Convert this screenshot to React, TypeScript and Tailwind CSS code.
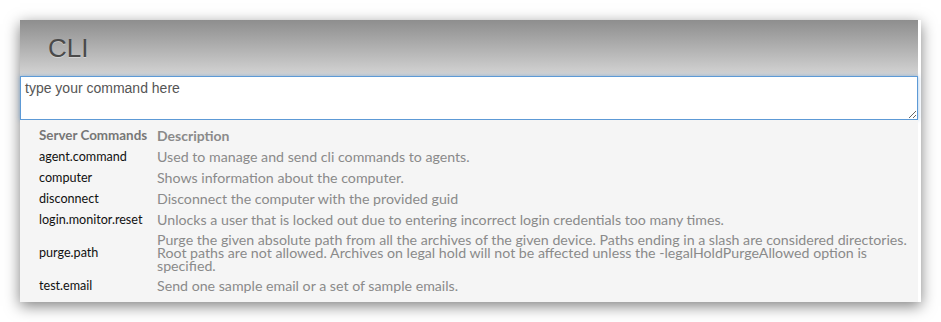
import React from "react";

const rows: { cmd: string; desc: string }[] = [
  { cmd: "agent.command", desc: "Used to manage and send cli commands to agents." },
  { cmd: "computer", desc: "Shows information about the computer." },
  { cmd: "disconnect", desc: "Disconnect the computer with the provided guid" },
  {
    cmd: "login.monitor.reset",
    desc: "Unlocks a user that is locked out due to entering incorrect login credentials too many times.",
  },
  {
    cmd: "purge.path",
    desc: "Purge the given absolute path from all the archives of the given device. Paths ending in a slash are considered directories. Root paths are not allowed. Archives on legal hold will not be affected unless the -legalHoldPurgeAllowed option is specified.",
  },
  { cmd: "test.email", desc: "Send one sample email or a set of sample emails." },
];

export default function App() {
  return (
    <div className="w-[941px] h-[322px] bg-white pt-[20px] pl-[20px] overflow-hidden">
      <div className="w-[901px] bg-white shadow-[0_4px_14px_rgba(0,0,0,0.5)]">
        <div className="w-[898px]">
          <div className="h-[56px] bg-gradient-to-b from-[#8e8e8e] to-[#d5d5d5] flex items-center pl-[28px]">
            <span
              className="text-[26px] text-[#4a4a4a] leading-none [text-shadow:0_1px_0_rgba(255,255,255,0.35)]"
              style={{ fontFamily: '"Liberation Sans", Arial, sans-serif' }}
            >
              CLI
            </span>
          </div>
          <textarea
            autoFocus
            placeholder="type your command here"
            className="block w-full h-[44px] bg-white border border-[#5d9ad6] shadow-[0_0_4px_rgba(93,154,214,0.6)] outline-none px-[4px] py-[2px] text-[14px] leading-[18px] text-[#222] placeholder:text-[#555]"
            style={{ fontFamily: '"Liberation Sans", Arial, sans-serif' }}
          />
          <div
            className="bg-[#f5f5f5] pt-[5px] pb-[6px] pl-[19px] pr-[6px]"
            style={{ fontFamily: 'Lato, "Liberation Sans", sans-serif' }}
          >
            <div className="grid grid-cols-[118px_1fr]">
              <div className="h-[21px] flex items-center text-[13.4px] font-bold text-[#777] whitespace-nowrap">
                Server Commands
              </div>
              <div className="h-[21px] flex items-center text-[14px] font-bold text-[#8a8a8a]">
                Description
              </div>
              {rows.map((r) => (
                <React.Fragment key={r.cmd}>
                  <div className="flex items-center text-[12.6px] text-[#111] leading-[13px] whitespace-nowrap">
                    {r.cmd}
                  </div>
                  <div className="flex items-center min-h-[21px] py-[3px] text-[14.2px] text-[#8a8a8a] leading-[13px]">
                    {r.desc}
                  </div>
                </React.Fragment>
              ))}
            </div>
          </div>
        </div>
      </div>
    </div>
  );
}
